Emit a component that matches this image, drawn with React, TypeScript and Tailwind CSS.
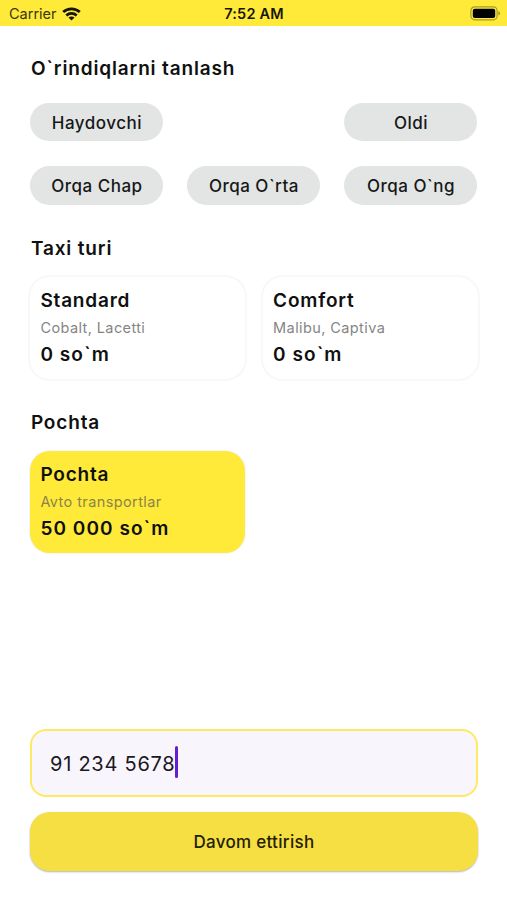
import type { ReactNode } from "react";

function WifiIcon() {
  return (
    <svg width="19" height="14" viewBox="0 0 19 14" fill="none" stroke="#17150a" strokeWidth="2.7">
      <path d="M1.2 5.1C5.8.8 13.2.8 17.8 5.1" />
      <path d="M4.3 8.4C7.2 5.7 11.8 5.7 14.7 8.4" />
      <path d="M9.5 13.6L6.5 10.5C8.2 9 10.8 9 12.5 10.5Z" fill="#17150a" stroke="none" />
    </svg>
  );
}

function BatteryIcon() {
  return (
    <svg width="31" height="15" viewBox="0 0 31 15" fill="none">
      <rect x="0.9" y="0.9" width="26.2" height="12.9" rx="3.8" stroke="#a69a2b" strokeWidth="1.2" />
      <rect x="2.8" y="2.8" width="22.4" height="9.1" rx="2" fill="#000" />
      <path d="M28.4 5.1C30.7 6 30.7 8.7 28.4 9.6Z" fill="#a69a2b" />
    </svg>
  );
}

function SectionTitle({ children }: { children: ReactNode }) {
  return (
    <h2 className="h-6 pl-[0.5px] whitespace-nowrap text-[19px] leading-6 font-semibold tracking-[0.85px]">
      {children}
    </h2>
  );
}

function Seat({ label, className = "" }: { label: string; className?: string }) {
  return (
    <button
      className={`h-[38.5px] w-[133px] rounded-full bg-[#e2e5e4] text-center text-[17px] leading-[40px] font-medium tracking-[0.5px] whitespace-nowrap text-[#161818] ${className}`}
    >
      {label}
    </button>
  );
}

interface OptionProps {
  title: string;
  detail: string;
  price: string;
  selected?: boolean;
}

function OptionCard({ title, detail, price, selected = false }: OptionProps) {
  return (
    <div
      className={`h-[102px] w-[214.4px] rounded-[20px] pt-3 pl-[10px] whitespace-nowrap ${
        selected ? "bg-[#ffea3a] shadow-[0_0_2px_rgba(0,0,0,0.12)]" : "bg-white shadow-[0_0_1px_1.5px_#f8f8f8]"
      }`}
    >
      <div className="h-6 text-[19px] leading-6 font-semibold tracking-[0.8px]">{title}</div>
      <div
        className={`mt-1 h-[22px] text-[14.5px] leading-[22px] tracking-[0.4px] ${
          selected ? "text-[#8c8448]" : "text-[#858585]"
        }`}
      >
        {detail}
      </div>
      <div className="mt-1 h-6 text-[19px] leading-6 font-semibold tracking-[1.05px]">{price}</div>
    </div>
  );
}

export default function App() {
  return (
    <div className="flex h-[900px] w-[507px] flex-col overflow-hidden bg-white font-['Inter',sans-serif] text-[#101010]">
      <header className="grid h-[25.5px] shrink-0 grid-cols-3 items-center bg-[#ffea3a] px-[9px] pt-0.5 text-[14.5px] text-[#17150a]">
        <div className="flex items-center gap-[5px]">
          <span className="leading-5 text-[#39350f]">Carrier</span>
          <WifiIcon />
        </div>
        <div className="pl-px text-center leading-5 font-semibold tracking-[0.2px] whitespace-nowrap">7:52 AM</div>
        <div className="-mr-[3px] flex justify-end">
          <BatteryIcon />
        </div>
      </header>

      <main className="flex flex-1 flex-col pt-[31.5px] pr-[29.5px] pb-[29px] pl-[30.4px]">
        <SectionTitle>O`rindiqlarni tanlash</SectionTitle>
        <div className="mt-[21.5px] grid grid-cols-[133px_133px_133px] justify-between gap-y-[25px]">
          <Seat label="Haydovchi" />
          <Seat label="Oldi" className="col-start-3" />
          <Seat label="Orqa Chap" />
          <Seat label="Orqa O`rta" />
          <Seat label="Orqa O`ng" />
        </div>

        <div className="mt-8">
          <SectionTitle>Taxi turi</SectionTitle>
        </div>
        <div className="mt-[16.5px] flex justify-between">
          <OptionCard title="Standard" detail="Cobalt, Lacetti" price="0 so`m" />
          <OptionCard title="Comfort" detail="Malibu, Captiva" price="0 so`m" />
        </div>

        <div className="mt-[31.5px]">
          <SectionTitle>Pochta</SectionTitle>
        </div>
        <div className="mt-4">
          <OptionCard title="Pochta" detail="Avto transportlar" price="50 000 so`m" selected />
        </div>

        <div className="mt-auto flex h-[68px] items-center rounded-2xl border-2 border-[#fdea62] bg-[#f9f5fd] pl-[17.6px]">
          <span className="pt-0.5 text-[20px] leading-8 tracking-[0.75px] whitespace-nowrap text-[#1b181f]">
            91 234 5678
          </span>
          <span className="-mt-0.5 h-8 w-[3px] rounded-full bg-[#651fd0]" />
        </div>
        <button className="mt-[15px] h-[59px] shrink-0 rounded-[20px] bg-[#f5df43] pt-0.5 text-[17px] font-medium tracking-[0.3px] text-[#242006] shadow-[0_1px_2px_rgba(0,0,0,0.3)]">
          Davom ettirish
        </button>
      </main>
    </div>
  );
}
